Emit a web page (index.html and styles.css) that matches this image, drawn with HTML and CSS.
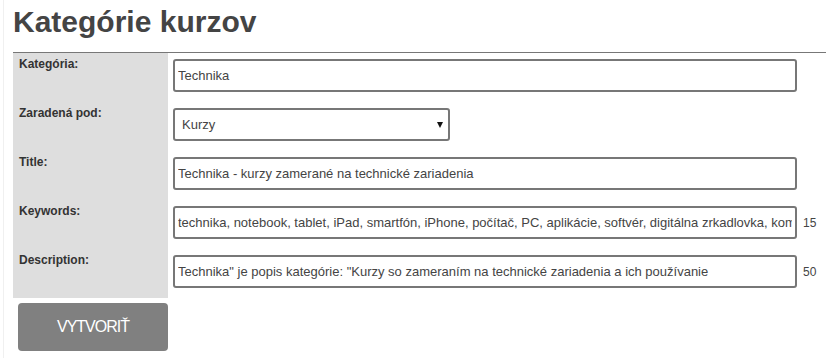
FILE: index.html
```html
<!DOCTYPE html>
<html lang="sk">
<head>
<meta charset="utf-8">
<title>Kategórie kurzov</title>
<link rel="stylesheet" href="styles.css">
</head>
<body>
<div class="page">
  <h1 class="title">Kategórie kurzov</h1>
  <form class="form">
    <div class="row">
      <label class="lbl">Kategória:</label>
      <div class="field"><input class="txt" type="text" value="Technika"></div>
    </div>
    <div class="row">
      <label class="lbl">Zaradená pod:</label>
      <div class="field">
        <span class="sel-wrap">
          <select class="sel"><option>Kurzy</option></select>
        </span>
      </div>
    </div>
    <div class="row">
      <label class="lbl">Title:</label>
      <div class="field"><input class="txt" type="text" value="Technika - kurzy zamerané na technické zariadenia"></div>
    </div>
    <div class="row">
      <label class="lbl">Keywords:</label>
      <div class="field"><input class="txt" type="text" value="technika, notebook, tablet, iPad, smartfón, iPhone, počítač, PC, aplikácie, softvér, digitálna zrkadlovka, kompaktný fotoaparát"><span class="count">15</span></div>
    </div>
    <div class="row">
      <label class="lbl">Description:</label>
      <div class="field"><input class="txt" type="text" value="Technika&quot; je popis kategórie: &quot;Kurzy so zameraním na technické zariadenia a ich používanie"><span class="count">50</span></div>
    </div>
  </form>
  <button class="btn" type="button">VYTVORIŤ</button>
</div>
</body>
</html>
```

FILE: styles.css
```css
html, body {
  margin: 0;
  background: #fff;
}
body {
  font-family: "Liberation Sans", Arial, sans-serif;
  color: #333;
}
.page {
  margin-left: 3px;
  border-left: 1px solid #f0f0f0;
  padding-left: 9px;
  min-height: 358px;
  box-sizing: border-box;
}
.title {
  margin: 0;
  height: 52px;
  box-sizing: border-box;
  padding-top: 5px;
  font-size: 30px;
  line-height: 34px;
  font-weight: bold;
  color: #444;
}
.form {
  margin: 0;
  border-top: 1px solid #777;
}
.row {
  display: flex;
  height: 49px;
}
.lbl {
  flex: none;
  width: 155px;
  background: #dedede;
  padding: 4px 6px;
  box-sizing: border-box;
  font-size: 12px;
  font-weight: bold;
  color: #333;
}
.field {
  display: flex;
  align-items: center;
  align-self: flex-start;
  padding-left: 5px;
  padding-top: 6px;
}
.txt {
  width: 624px;
  height: 33px;
  box-sizing: border-box;
  border: 2px solid #777;
  border-radius: 3px;
  padding: 0 3px;
  margin: 0;
  font-family: "Liberation Sans", Arial, sans-serif;
  font-size: 13px;
  color: #444;
  background: #fff;
  outline: none;
}
.count {
  margin-left: 6px;
  font-size: 12px;
  color: #444;
}
.sel-wrap {
  position: relative;
  display: inline-block;
}
.sel {
  -webkit-appearance: none;
  appearance: none;
  width: 277px;
  height: 33px;
  box-sizing: border-box;
  border: 2px solid #777;
  border-radius: 3px;
  padding: 0 7px;
  margin: 0;
  font-family: "Liberation Sans", Arial, sans-serif;
  font-size: 13px;
  color: #444;
  background: #fff;
  outline: none;
}
.sel-wrap::after {
  content: "";
  position: absolute;
  right: 7px;
  top: 14px;
  width: 0;
  height: 0;
  border-left: 3px solid transparent;
  border-right: 3px solid transparent;
  border-top: 6px solid #111;
  pointer-events: none;
}
.btn {
  display: block;
  margin: 5px 0 0 5px;
  width: 150px;
  height: 48px;
  border: none;
  border-radius: 4px;
  background: #808080;
  color: #fff;
  font-family: "Liberation Sans", Arial, sans-serif;
  font-size: 16px;
  letter-spacing: -1px;
  padding: 0;
}
```
